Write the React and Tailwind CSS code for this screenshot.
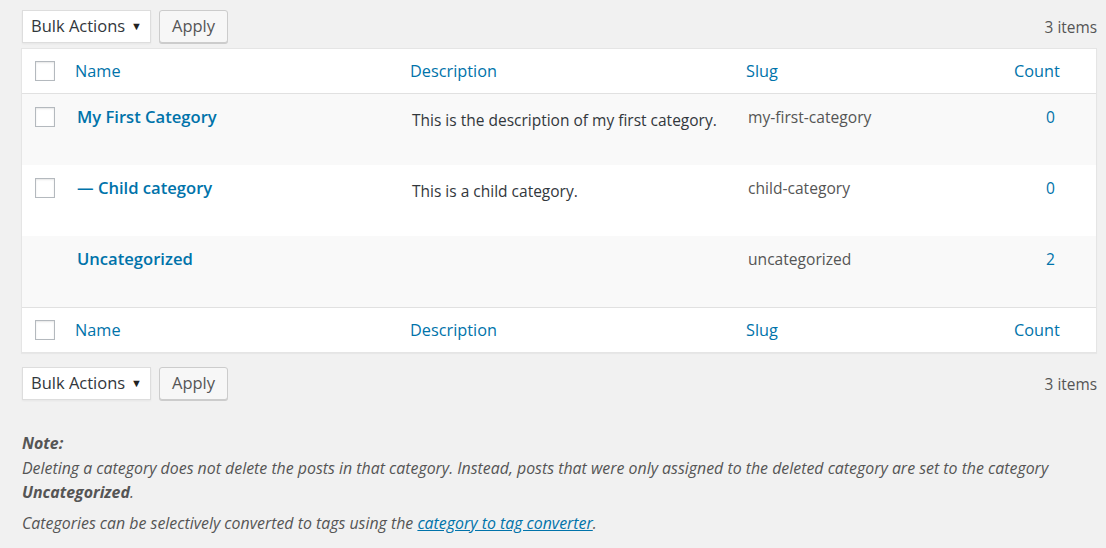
import React from "react";

const rows = [
  { name: "My First Category", desc: "This is the description of my first category.", slug: "my-first-category", count: 0, check: true, bg: "bg-[#f9f9f9]" },
  { name: "— Child category", desc: "This is a child category.", slug: "child-category", count: 0, check: true, bg: "bg-white" },
  { name: "Uncategorized", desc: "", slug: "uncategorized", count: 2, check: false, bg: "bg-[#f9f9f9]" },
];

const Checkbox = () => (
  <span className="block w-[20px] h-[20px] border border-[#b4b9be] bg-white shadow-[inset_0_1px_2px_rgba(0,0,0,0.1)]" />
);

const Bar = () => (
  <div className="flex items-center h-[33px]">
    <div className="flex items-center w-[129px] h-[33px] bg-white border border-[#ddd] pl-[8px] pr-[8px] text-[16.5px] text-[#32373c] shadow-[0_1px_2px_rgba(0,0,0,0.05)]">
      <span className="flex-1">Bulk Actions</span>
      <span className="text-[11px] text-[#222]">▼</span>
    </div>
    <button className="ml-[8px] w-[69px] h-[33px] rounded-[3px] border border-[#ccc] bg-[#f7f7f7] text-[16.5px] text-[#555] shadow-[0_1px_0_#ccc]">
      Apply
    </button>
    <span className="ml-auto pt-[2px] text-[15.4px] text-[#555]">3 items</span>
  </div>
);

const HeadRow = ({ top }) => (
  <div className={`flex items-center h-[45px] bg-white text-[16.3px] text-[#0073aa] ${top ? "border-b" : "border-t"} border-[#e1e1e1]`}>
    <div className="w-[43px] pl-[13px]"><Checkbox /></div>
    <div className="w-[335px] pl-[10px]">Name</div>
    <div className="w-[336px] pl-[10px]">Description</div>
    <div className="w-[268px] pl-[10px]">Slug</div>
    <div className="flex-1 pl-[10px]">Count</div>
  </div>
);

export default function App() {
  return (
    <div className="min-h-screen bg-[#f1f1f1] pt-[10px] px-[21px] pr-[9px]" style={{ fontFamily: '"Open Sans", "Noto Sans", sans-serif' }}>
      <div className="pl-[1px]"><Bar /></div>

      <div className="mt-[5px] border border-[#e5e5e5] bg-white shadow-[0_1px_1px_rgba(0,0,0,0.04)]">
        <HeadRow top />
        {rows.map((r, i) => (
          <div key={i} className={`flex items-start h-[71px] ${r.bg}`}>
            <div className="w-[43px] pl-[13px] pt-[13px]">{r.check && <Checkbox />}</div>
            <div className="w-[335px] pl-[12px] pt-[11px] text-[16.6px] font-semibold text-[#0073aa]">{r.name}</div>
            <div className="w-[336px] pl-[12px] pt-[15px] text-[15.5px] text-[#32373c]">{r.desc}</div>
            <div className="w-[268px] pl-[12px] pt-[12px] text-[15.6px] text-[#555]">{r.slug}</div>
            <div className="flex-1 pl-[42px] pt-[12px] text-[15.6px] text-[#0073aa]">{r.count}</div>
          </div>
        ))}
        <HeadRow />
      </div>

      <div className="mt-[14px] pl-[1px]"><Bar /></div>

      <div className="mt-[31px] pl-[1px] text-[15.9px] leading-[24.5px] italic text-[#555]">
        <p className="font-bold">Note:</p>
        <p>
          Deleting a category does not delete the posts in that category. Instead, posts that were only assigned to the deleted category are set to the category
          <br />
          <strong>Uncategorized</strong>.
        </p>
        <p className="mt-[6px]">
          Categories can be selectively converted to tags using the <a className="text-[#0073aa] underline">category to tag converter</a>.
        </p>
      </div>
    </div>
  );
}
